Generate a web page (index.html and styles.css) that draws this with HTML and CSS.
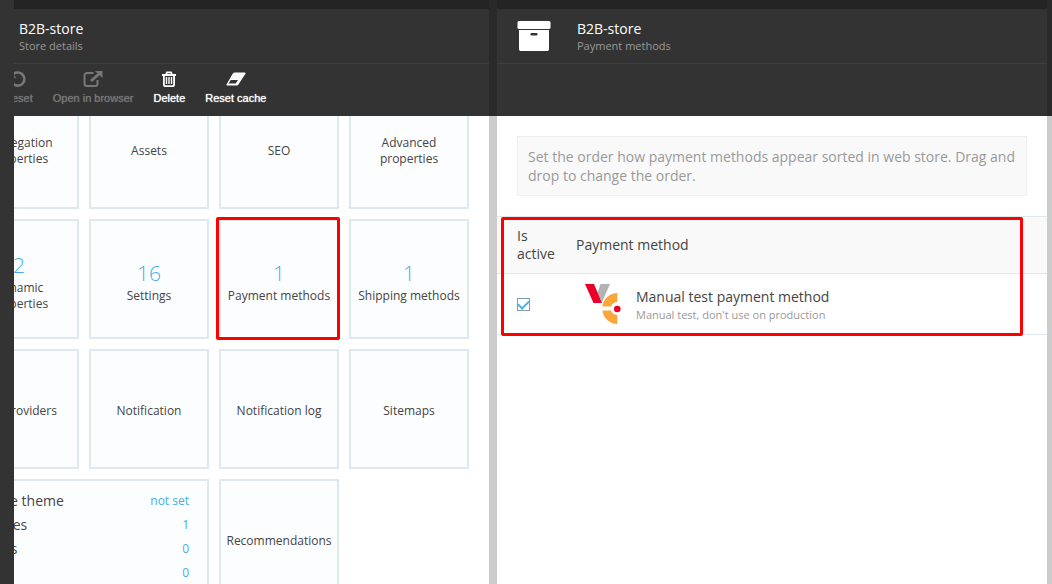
FILE: index.html
```html
<!DOCTYPE html>
<html lang="en">
<head>
<meta charset="utf-8">
<title>B2B-store – Payment methods</title>
<link rel="stylesheet" href="styles.css">
</head>
<body>
<div class="app">
  <div class="rail"></div>

  <section class="blade blade-store">
    <div class="blade-inner">
      <header class="blade-head">
        <div class="blade-title">
          <div class="blade-icon"></div>
          <div>
            <h1>B2B-store</h1>
            <p>Store details</p>
          </div>
        </div>
        <div class="toolbar">
          <button class="tool" type="button" disabled>
            <svg viewBox="0 0 16 16" width="16" height="16"><path d="M2.300 4.400A6.600 6.600 0 1 1 3 12.600" fill="none" stroke="currentColor" stroke-width="2.600"/><path d="M.8 1v5.800h5.800z" fill="currentColor"/></svg>
            <span>Reset</span>
          </button>
          <button class="tool" type="button" disabled>
            <svg viewBox="0 0 20 16" width="20" height="16"><path d="M10.500 2H4A2.500 2.500 0 0 0 1.500 4.500v8A2.500 2.500 0 0 0 4 15h8a2.500 2.500 0 0 0 2.500-2.500V9" fill="none" stroke="currentColor" stroke-width="2"/><path d="M8 10 16.500 2.500" stroke="currentColor" stroke-width="3"/><path d="M12 0h7.500v7z" fill="currentColor"/></svg>
            <span>Open in browser</span>
          </button>
          <button class="tool" type="button">
            <svg viewBox="0 0 16 16" width="16" height="16"><path d="M1 4h14M5 3.500l1-2.200h4l1 2.200M2.900 4v9.500q0 1.700 1.500 1.700h7.200q1.500 0 1.500-1.700V4" fill="none" stroke="currentColor" stroke-width="1.800"/><path d="M5.500 6v7M8 6v7M10.500 6v7" stroke="currentColor" stroke-width="1.400"/></svg>
            <span>Delete</span>
          </button>
          <button class="tool" type="button">
            <svg viewBox="0 0 20 16" width="20" height="16"><path d="M8.500 1.500h10q1.700 0 .8 1.500l-6.600 10q-.7 1.500-2 1.500H1.500Q-.2 14.500.8 13l5.700-10Q7.200 1.500 8.500 1.500z" fill="currentColor"/><path d="M4.700 9h7.300l-2.300 3.500H2.600z" fill="#333"/></svg>
            <span>Reset cache</span>
          </button>
        </div>
      </header>

      <div class="tiles">
        <a class="tile" href="#"><span class="name">Aggregation properties</span></a>
        <a class="tile" href="#"><span class="name">Assets</span></a>
        <a class="tile" href="#"><span class="name">SEO</span></a>
        <a class="tile" href="#"><span class="name">Advanced properties</span></a>

        <a class="tile" href="#"><span class="count">2</span><span class="name">Dynamic properties</span></a>
        <a class="tile" href="#"><span class="count">16</span><span class="name">Settings</span></a>
        <a class="tile tile-marked" href="#"><span class="count">1</span><span class="name">Payment methods</span></a>
        <a class="tile" href="#"><span class="count">1</span><span class="name">Shipping methods</span></a>

        <a class="tile" href="#"><span class="name">Tax providers</span></a>
        <a class="tile" href="#"><span class="name">Notification</span></a>
        <a class="tile" href="#"><span class="name">Notification log</span></a>
        <a class="tile" href="#"><span class="name">Sitemaps</span></a>

        <dl class="tile tile-list">
          <div><dt>Active theme</dt><dd><a href="#">not set</a></dd></div>
          <div><dt>Locales</dt><dd><a href="#">1</a></dd></div>
          <div><dt>Pages</dt><dd><a href="#">0</a></dd></div>
          <div><dt>Lists</dt><dd><a href="#">0</a></dd></div>
        </dl>
        <a class="tile" href="#"><span class="name">Recommendations</span></a>
      </div>
    </div>
  </section>

  <section class="blade blade-payments">
    <div class="blade-inner">
      <header class="blade-head">
        <div class="blade-title">
          <div class="blade-icon">
            <svg viewBox="0 0 34 32" width="34" height="32"><rect x=".5" y="1" width="33" height="8" rx="1.500" fill="#fff"/><path d="M2 10h30v19q0 2-1.500 2h-27Q2 31 2 29z" fill="#fff"/><rect x="13.500" y="13" width="7" height="2.500" rx="1.200" fill="#333"/></svg>
          </div>
          <div>
            <h1>B2B-store</h1>
            <p>Payment methods</p>
          </div>
        </div>
        <div class="toolbar"></div>
      </header>

      <p class="note">Set the order how payment methods appear sorted in web store. Drag and drop to change the order.</p>

      <div class="methods">
        <table>
          <thead>
            <tr><th class="col-active" id="active">Is active</th><th id="method">Payment method</th></tr>
          </thead>
          <tbody>
            <tr>
              <td class="col-active"><input class="check" type="checkbox" id="manual" checked></td>
              <td>
                <label class="method" for="manual">
                  <svg viewBox="0 0 36 40" width="36" height="40"><path d="M15.500 0H25l-8 18-4.500-9z" fill="#b2b3b2"/><path d="M0 0h9l8 19H8.500z" fill="#e90029"/><path d="M32.300 9v9a7 7 0 0 0-6.300 4.500H17.300A15.500 15.500 0 0 1 32.300 9zM17.300 26.500H26a7 7 0 0 0 6.300 4.500v9A15.500 15.500 0 0 1 17.300 26.500z" fill="#faa63c"/><circle cx="32.300" cy="25" r="3.300" fill="#e90029"/></svg>
                  <span class="method-text"><span class="method-name">Manual test payment method</span><span class="method-info">Manual test, don't use on production</span></span>
                </label>
              </td>
            </tr>
          </tbody>
        </table>
      </div>
    </div>
  </section>
  <div class="edge"></div>
</div>
</body>
</html>
```
FILE: styles.css
```css
* { box-sizing: border-box; }

body {
  margin: 0;
  overflow: hidden;
  font-family: "Open Sans", "Noto Sans", sans-serif;
  font-size: 12px;
  line-height: 16px;
  color: #444;
  background: #ccc;
}

h1, p, dl, dd { margin: 0; }
svg { flex: none; }
a { color: #43b0e6; text-decoration: none; }

.app {
  display: flex;
  height: 100vh;
  overflow: hidden;
  background: linear-gradient(#2a2a2a 116px, #ccc 116px);
}

.rail { flex: 0 0 14px; background: #333; }
.edge { flex: 0 0 5px; }

.blade {
  display: flex;
  justify-content: flex-end;
  min-width: 0;
  overflow: hidden;
  background: #fff;
}
.blade-store { flex: 475 1 0; margin-right: 8px; }
.blade-payments { flex: 550 1 0; }
.blade-inner { flex: 1 0 550px; }
.blade-payments .blade-inner { flex-shrink: 1; min-width: 0; }

.blade-head {
  position: relative;
  z-index: 1;
  background: #333;
  border-top: 9px solid #242424;
}
.blade-title {
  display: flex;
  height: 55px;
  padding: 11px 20px 0;
  border-bottom: 1px solid #3f3f3f;
}
.blade-icon { flex: 0 0 60px; }
.blade-title h1 {
  font-size: 14px;
  font-weight: 400;
  line-height: 18px;
  color: #fff;
}
.blade-title p {
  font-size: 11px;
  line-height: 16px;
  color: #999;
}

.toolbar {
  display: flex;
  gap: 20px;
  height: 52px;
  padding: 7px 20px 0 65px;
}
.tool {
  display: flex;
  flex-direction: column;
  align-items: center;
  gap: 4px;
  height: 34px;
  padding: 0;
  border: 0;
  background: none;
  color: #fff;
  font: 11px/14px "Liberation Sans", sans-serif;
  text-shadow: 0 0 1px currentColor;
  white-space: nowrap;
}
.tool:disabled { color: #777; }

.tiles {
  display: grid;
  grid-template-columns: repeat(4, 120px);
  grid-auto-rows: 120px;
  gap: 10px;
  justify-content: end;
  margin-top: -27px;
  padding: 0 20px;
}
.tile {
  position: relative;
  display: flex;
  flex-direction: column;
  justify-content: center;
  padding: 4px 4px 0;
  border: 2px solid #dee9ef;
  background: #fcfdff;
  color: #444;
  text-align: center;
}
.count {
  font-size: 21px;
  font-weight: 300;
  line-height: 30px;
  color: #43b0e6;
}
.tile-marked::after {
  content: "";
  position: absolute;
  inset: -4px -3px -3px -5px;
  border: 3px solid #f00;
  border-radius: 2px;
}
.tile-list {
  grid-column: span 2;
  justify-content: flex-start;
  padding: 8px 18px;
  text-align: left;
}
.tile-list div {
  display: flex;
  justify-content: space-between;
  line-height: 24px;
}
.tile-list dt { font-size: 14px; }

.note {
  margin: 20px;
  padding: 10px;
  border: 1px solid #eee;
  background: #f9f9f9;
  color: #999;
  font-size: 14px;
  line-height: 19px;
}

.methods { position: relative; }
.methods::after {
  content: "";
  position: absolute;
  inset: 1px 24px -1px 4px;
  border: 3px solid #f00;
  border-radius: 2px;
  pointer-events: none;
}
table {
  width: 100%;
  border-collapse: collapse;
  table-layout: fixed;
}
tr {
  border-top: 1px solid #dee9ef;
  border-bottom: 1px solid #dee9ef;
}
th {
  height: 57px;
  padding: 0 20px;
  background: #f9f9f9;
  font-size: 14px;
  font-weight: 400;
  line-height: 18px;
  text-align: left;
}
td { height: 61px; padding: 0 29px; }
.methods .col-active { width: 59px; padding: 0 0 0 20px; }

.check {
  display: flex;
  align-items: flex-start;
  justify-content: center;
  appearance: none;
  width: 13px;
  height: 13px;
  margin: 0;
  padding: 1px 0 0;
  border: 1px solid #7f9db5;
  background: #fff;
}
.check:checked::before {
  content: "";
  width: 9px;
  height: 5px;
  border: solid #43b0e6;
  border-width: 0 0 2px 2px;
  transform: rotate(-45deg);
}

.method { display: flex; align-items: center; gap: 15px; }
.method-text { display: flex; flex-direction: column; padding-top: 3px; }
.method-name { font-size: 14px; line-height: 18px; }
.method-info { font-size: 11px; line-height: 17px; color: #999; }
```
